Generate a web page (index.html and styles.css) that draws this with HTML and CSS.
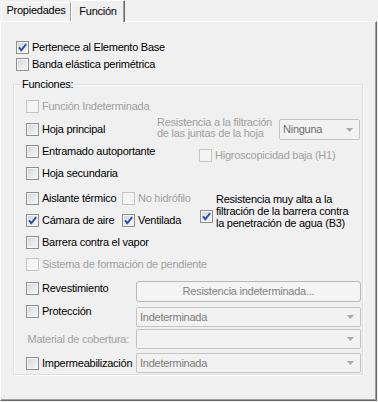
FILE: index.html
```html
<!DOCTYPE html>
<html>
<head>
<meta charset="utf-8">
<link rel="stylesheet" href="styles.css">
</head>
<body>
<div class="tabs">
  <div class="tab">Propiedades</div>
  <div class="tab active">Función</div>
</div>
<div class="panel">
  <div class="cb-row top-row first">
    <span class="cb"><svg class="tick" width="11" height="11" viewBox="0 0 11 11"><path d="M2 5.3 L4.3 8.2 L9.2 2.2" fill="none" stroke="#2d4fa6" stroke-width="1.9"/></svg></span>
    <span class="lbl">Pertenece al Elemento Base</span>
  </div>
  <div class="cb-row top-row second">
    <span class="cb"></span>
    <span class="lbl">Banda elástica perimétrica</span>
  </div>

  <div class="group">
    <div class="legend">Funciones:</div>

    <div class="cb-row disabled r1">
      <span class="cb"></span>
      <span class="lbl">Función Indeterminada</span>
    </div>

    <div class="row r2">
      <div class="cb-row w131">
        <span class="cb"></span>
        <span class="lbl">Hoja principal</span>
      </div>
      <div class="hint">Resistencia a la filtración<br>de las juntas de la hoja</div>
      <div class="combo small">
        <span class="ctext">Ninguna</span>
        <svg class="arrow" width="7" height="4" viewBox="0 0 7 4"><path d="M0 0H7L3.5 4Z" fill="#a9a9a9"/></svg>
      </div>
    </div>

    <div class="row r3">
      <div class="cb-row w173">
        <span class="cb"></span>
        <span class="lbl">Entramado autoportante</span>
      </div>
      <div class="cb-row disabled hygro">
        <span class="cb"></span>
        <span class="lbl">Higroscopicidad baja (H1)</span>
      </div>
    </div>

    <div class="cb-row r4">
      <span class="cb"></span>
      <span class="lbl">Hoja secundaria</span>
    </div>

    <div class="row r56">
      <div class="col w174">
        <div class="row">
          <div class="cb-row w96">
            <span class="cb"></span>
            <span class="lbl">Aislante térmico</span>
          </div>
          <div class="cb-row disabled">
            <span class="cb"></span>
            <span class="lbl">No hidrófilo</span>
          </div>
        </div>
        <div class="row second-line">
          <div class="cb-row w96">
            <span class="cb"><svg class="tick" width="11" height="11" viewBox="0 0 11 11"><path d="M2 5.3 L4.3 8.2 L9.2 2.2" fill="none" stroke="#2d4fa6" stroke-width="1.9"/></svg></span>
            <span class="lbl">Cámara de aire</span>
          </div>
          <div class="cb-row">
            <span class="cb"><svg class="tick" width="11" height="11" viewBox="0 0 11 11"><path d="M2 5.3 L4.3 8.2 L9.2 2.2" fill="none" stroke="#2d4fa6" stroke-width="1.9"/></svg></span>
            <span class="lbl">Ventilada</span>
          </div>
        </div>
      </div>
      <div class="b3">
        <span class="cb"><svg class="tick" width="11" height="11" viewBox="0 0 11 11"><path d="M2 5.3 L4.3 8.2 L9.2 2.2" fill="none" stroke="#2d4fa6" stroke-width="1.9"/></svg></span>
        <span class="b3-text">Resistencia muy alta a la<br>filtración de la barrera contra<br>la penetración de agua (B3)</span>
      </div>
    </div>

    <div class="cb-row r7">
      <span class="cb"></span>
      <span class="lbl">Barrera contra el vapor</span>
    </div>

    <div class="cb-row disabled r8">
      <span class="cb"></span>
      <span class="lbl">Sistema de formación de pendiente</span>
    </div>

    <div class="row r9">
      <div class="cb-row w110 nudge">
        <span class="cb"></span>
        <span class="lbl">Revestimiento</span>
      </div>
      <div class="button">Resistencia indeterminada...</div>
    </div>

    <div class="row r10">
      <div class="cb-row w110">
        <span class="cb"></span>
        <span class="lbl">Protección</span>
      </div>
      <div class="combo wide lowered">
        <span class="ctext">Indeterminada</span>
        <svg class="arrow" width="7" height="4" viewBox="0 0 7 4"><path d="M0 0H7L3.5 4Z" fill="#a9a9a9"/></svg>
      </div>
    </div>

    <div class="row r11">
      <div class="side-label">Material de cobertura:</div>
      <div class="combo wide">
        <span class="ctext"></span>
        <svg class="arrow" width="7" height="4" viewBox="0 0 7 4"><path d="M0 0H7L3.5 4Z" fill="#a9a9a9"/></svg>
      </div>
    </div>

    <div class="row r12">
      <div class="cb-row w110">
        <span class="cb"></span>
        <span class="lbl">Impermeabilización</span>
      </div>
      <div class="combo wide">
        <span class="ctext">Indeterminada</span>
        <svg class="arrow" width="7" height="4" viewBox="0 0 7 4"><path d="M0 0H7L3.5 4Z" fill="#a9a9a9"/></svg>
      </div>
    </div>
  </div>
</div>
</body>
</html>
```

FILE: styles.css
```css
* {
  box-sizing: border-box;
}

html, body {
  margin: 0;
  padding: 0;
}

body {
  width: 378px;
  height: 402px;
  overflow: hidden;
  background: #f0f0f0;
  color: #000;
  font-family: "Liberation Sans", Arial, sans-serif;
  font-size: 11px;
  line-height: 13px;
  letter-spacing: -0.25px;
}

/* Tabs */
.tabs {
  display: flex;
  align-items: flex-end;
  height: 21px;
  padding-left: 1px;
}

.tab {
  width: 70px;
  height: 19px;
  padding-top: 1px;
  text-align: center;
  border-top: 1px solid #fff;
  border-left: 1px solid #fff;
  border-right: 1px solid #a0a0a0;
  white-space: nowrap;
}

.tab.active {
  width: 54px;
  height: 22px;
  padding-top: 4px;
  margin-bottom: -1px;
  position: relative;
  z-index: 1;
  background: #f0f0f0;
  border-right: 1px solid #696969;
  box-shadow: inset -1px 0 0 #a0a0a0;
}

/* Panel */
.panel {
  width: 377px;
  height: 380px;
  border-top: 1px solid #fff;
  border-left: 1px solid #fff;
  border-right: 1px solid #696969;
  border-bottom: 1px solid #696969;
  box-shadow: inset -1px -1px 0 #a0a0a0;
  padding: 19px 0 0 12px;
  display: flex;
  flex-direction: column;
  align-items: flex-start;
}

.top-row {
  margin-left: 3px;
}

.top-row.second {
  margin-top: 4px;
}

/* Checkbox rows */
.cb-row {
  display: flex;
  align-items: center;
  height: 13px;
  white-space: nowrap;
  flex-shrink: 0;
}

.cb {
  width: 13px;
  height: 13px;
  flex: 0 0 13px;
  border: 1px solid #8e8f8f;
  background: linear-gradient(135deg, #cdd1d7 0%, #e4e6e9 45%, #f7f7f7 100%);
  box-shadow: inset 0 0 0 1px #f4f4f4;
  display: flex;
  align-items: center;
  justify-content: center;
}

.tick {
  display: block;
}

.lbl {
  margin-left: 3px;
}

.disabled .cb {
  border-color: #c5c5c5;
  background: #f4f4f4;
  box-shadow: none;
}

.disabled .lbl {
  color: #a0a0a0;
}

/* Group box */
.group {
  margin-top: 13px;
  width: 350px;
  border: 1px solid #d5dfe5;
  box-shadow: inset 1px 1px 0 #fff, 1px 1px 0 #fff;
  padding: 0 0 1px 12px;
  display: flex;
  flex-direction: column;
  align-items: flex-start;
}

.legend {
  margin-top: -7px;
  margin-left: -6px;
  padding: 0 2px;
  background: #f0f0f0;
  height: 13px;
}

.row {
  display: flex;
  flex-shrink: 0;
}

.col {
  display: flex;
  flex-direction: column;
}

.w96 { width: 96px; }
.w110 { width: 110px; }
.w131 { width: 131px; }
.w173 { width: 173px; }
.w174 { width: 174px; }

.r1 { margin-top: 9px; }

.r2 {
  margin-top: 6px;
  height: 21px;
  align-items: center;
}

.hint {
  width: 122px;
  align-self: flex-start;
  margin-top: -2px;
  line-height: 11px;
  color: #a0a0a0;
  white-space: nowrap;
}

.r3 {
  margin-top: 5px;
  height: 13px;
  align-items: flex-start;
}

.hygro {
  margin-top: 4px;
}

.r4 { margin-top: 9px; }

.r56 {
  margin-top: 12px;
  height: 35px;
  align-items: flex-start;
}

.second-line {
  margin-top: 9px;
}

.b3 {
  display: flex;
  align-items: flex-start;
  white-space: nowrap;
}

.b3 .cb {
  margin-top: 18px;
}

.b3-text {
  margin-left: 3px;
  margin-top: 1px;
  line-height: 12px;
}

.r7 { margin-top: 9px; }
.r8 { margin-top: 9px; }

.r9 {
  margin-top: 10px;
  align-items: flex-start;
}

.nudge {
  margin-top: 1px;
}

.button {
  width: 225px;
  height: 21px;
  border: 1px solid #b8b8b8;
  border-radius: 3px;
  background: #f4f4f4;
  color: #838383;
  text-align: center;
  line-height: 19px;
  white-space: nowrap;
}

.r10 {
  margin-top: 3px;
  align-items: flex-start;
}

.lowered {
  margin-top: 2px;
}

.r11 {
  margin-top: 2px;
  align-items: center;
}

.side-label {
  width: 110px;
  padding-right: 7px;
  text-align: right;
  color: #a0a0a0;
  white-space: nowrap;
}

.r12 {
  margin-top: 4px;
  align-items: center;
}

/* Combo boxes */
.combo {
  height: 20px;
  border: 1px solid #c4c4c4;
  border-radius: 2px;
  background: #f2f2f2;
  display: flex;
  align-items: center;
  justify-content: space-between;
  padding: 0 6px 0 3px;
  color: #7a7a7a;
  white-space: nowrap;
}

.combo.small {
  width: 81px;
  height: 21px;
  color: #6d6d6d;
}

.combo.wide {
  width: 225px;
}

.arrow {
  display: block;
  flex-shrink: 0;
}
```
